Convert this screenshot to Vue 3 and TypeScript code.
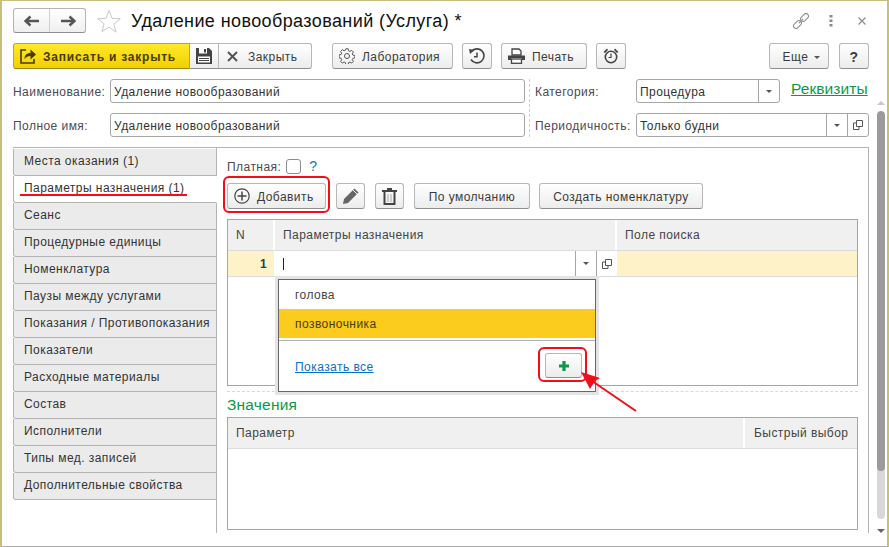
<script setup lang="ts">
const tabs: string[] = [
  'Места оказания (1)', 'Параметры назначения (1)', 'Сеанс', 'Процедурные единицы', 'Номенклатура',
  'Паузы между услугами', 'Показания / Противопоказания', 'Показатели', 'Расходные материалы',
  'Состав', 'Исполнители', 'Типы мед. записей', 'Дополнительные свойства',
]
const activeTab = 1
</script>

<template>
  <div class="window">
    <header class="head">
      <div class="nav">
        <button class="nav-btn">
          <svg width="16" height="12" viewBox="0 0 16 12"><path d="M1 6h14M6.500 1.500 1.500 6l5 4.500" fill="none" stroke="#555" stroke-width="2.400"/></svg>
        </button>
        <button class="nav-btn">
          <svg width="16" height="12" viewBox="0 0 16 12"><path d="M1 6h14M9.500 1.500 14.500 6l-5 4.500" fill="none" stroke="#555" stroke-width="2.400"/></svg>
        </button>
      </div>
      <svg class="star" width="24" height="24" viewBox="0 0 24 24"><path d="M12 1.500l3 7.800 8.300.5-6.400 5.300 2.100 8L12 18.200 5 22.600l2.100-8L.7 9.800 9 9.300z" fill="#fff" stroke="#c6c8ca"/></svg>
      <h1 class="title">Удаление новообразований (Услуга) *</h1>
      <div class="win-icons">
        <svg width="16" height="16" viewBox="0 0 16 16"><g fill="none" stroke="#8a8a8a" transform="rotate(-45 8 8)"><rect x="-1.500" y="5.500" width="9" height="5" rx="2.500"/><rect x="8.500" y="5.500" width="9" height="5" rx="2.500"/><path d="M5 8h6"/></g></svg>
        <svg class="dots" width="4" height="12" viewBox="0 0 4 12"><g fill="#8a8a8a"><rect x="0.500" y="0" width="3" height="2.500"/><rect x="0.500" y="4.500" width="3" height="2.500"/><rect x="0.500" y="9" width="3" height="2.500"/></g></svg>
        <svg class="x" width="8" height="8" viewBox="0 0 8 8"><path d="M.5.500l7 7M7.500.500l-7 7" stroke="#8a8a8a" stroke-width="1.100"/></svg>
      </div>
    </header>

    <div class="toolbar">
      <div class="group">
        <button class="btn primary">
          <svg width="16" height="16" viewBox="0 0 16 16"><path d="M6 2H1v13h13v-4" fill="none" stroke="#4a3b00" stroke-width="1.600"/><path d="M4.500 11c0-4 2.500-6 6-6V1.500L16 6.500l-5.500 5V8c-2.500 0-4.500 1-6 3z" fill="#4a3b00"/></svg>
          Записать и закрыть
        </button>
        <button class="btn joined icon-save">
          <svg width="16" height="16" viewBox="0 0 16 16"><path d="M0 0h13l3 3v13H0z" fill="#444"/><rect x="3" y="0" width="8" height="5.500" fill="#fff"/><rect x="8" y="1" width="2" height="3.500" fill="#444"/><rect x="2" y="8.500" width="12" height="6" fill="#fff"/><path d="M3 10.500h10M3 12.500h10" stroke="#444"/></svg>
        </button>
        <button class="btn joined close">
          <svg width="11" height="11" viewBox="0 0 11 11"><path d="M1 1l9 9M10 1l-9 9" stroke="#555" stroke-width="2"/></svg>
          Закрыть
        </button>
      </div>
      <button class="btn lab">
        <svg width="16" height="16" viewBox="0 0 16 16"><circle cx="8" cy="8" r="2.500" fill="none" stroke="#555"/><path d="M6.800 .8h2.400l.4 2 1.300.6 1.800-1.100 1.700 1.700-1.100 1.800.6 1.300 2 .4v2.400l-2 .4-.6 1.300 1.100 1.800-1.700 1.700-1.800-1.100-1.300.6-.4 2H6.800l-.4-2-1.300-.6-1.800 1.100-1.700-1.700 1.100-1.800-.6-1.300-2-.4V6.900l2-.4.6-1.300-1.100-1.800 1.700-1.700 1.800 1.100 1.300-.6z" fill="none" stroke="#555"/></svg>
        Лаборатория
      </button>
      <button class="btn square hist">
        <svg width="16" height="16" viewBox="0 0 16 16"><path d="M2.500 3.500A7 7 0 1 1 2 11.500" fill="none" stroke="#444" stroke-width="1.600"/><path d="M0 1l5.500 1L1 6z" fill="#444"/><path d="M8 4.500V8.700H5" fill="none" stroke="#444" stroke-width="1.500"/></svg>
      </button>
      <button class="btn print">
        <svg width="17" height="16" viewBox="0 0 17 16"><path d="M4 1h7l2 2v4H4z" fill="#fff" stroke="#444" stroke-width="1.300"/><path d="M0 7.500h17V12h-3v-2H3v2H0z" fill="#444"/><rect x="3.500" y="11" width="10" height="4.300" fill="#fff" stroke="#444" stroke-width="1.300"/></svg>
        Печать
      </button>
      <button class="btn square alarm">
        <svg width="16" height="16" viewBox="0 0 16 16"><circle cx="8" cy="9" r="5.700" fill="none" stroke="#444" stroke-width="1.600"/><path d="M8 5.500V9.500H5.500" fill="none" stroke="#444" stroke-width="1.200"/><path d="M0.500 4 4 .5 5 2 2 5zM15.500 4 12 .5 11 2l3 3z" fill="#444"/></svg>
      </button>
      <button class="btn more">Еще <i class="caret"></i></button>
      <button class="btn square help">?</button>
    </div>

    <div class="fields">
      <div class="col-left">
        <div class="row">
          <label class="lbl name-lbl">Наименование:</label>
          <div class="input wide">Удаление новообразований</div>
        </div>
        <div class="row">
          <label class="lbl name-lbl">Полное имя:</label>
          <div class="input wide">Удаление новообразований</div>
        </div>
      </div>
      <div class="col-right">
        <div class="row">
          <label class="lbl cat-lbl">Категория:</label>
          <div class="input cat">
            <span class="val">Процедура</span>
            <span class="cell"><i class="caret"></i></span>
          </div>
          <a class="requisites">Реквизиты</a>
        </div>
        <div class="row">
          <label class="lbl cat-lbl">Периодичность:</label>
          <div class="input per">
            <span class="val">Только будни</span>
            <span class="cell"><i class="caret"></i></span>
            <span class="cell open"><svg width="10" height="10" viewBox="0 0 10 10"><path d="M3.500.5h6v6h-6zM3 3H.5v6.500H6V7" fill="none" stroke="#555"/></svg></span>
          </div>
        </div>
      </div>
    </div>

    <div class="body">
      <div class="content">
        <nav class="tabs">
          <div v-for="(t, i) in tabs" :key="t" class="tab" :class="{ active: i === activeTab }">{{ t }}</div>
        </nav>
        <section class="page">
          <div class="paid">
            <span class="lbl">Платная:</span>
            <span class="check"></span>
            <span class="q">?</span>
          </div>
          <div class="actions">
            <button class="btn add">
              <svg width="16" height="16" viewBox="0 0 16 16"><circle cx="8" cy="8" r="7.200" fill="none" stroke="#444" stroke-width="1.200"/><path d="M8 3.500v9M3.500 8h9" stroke="#444" stroke-width="1.500"/></svg>
              Добавить
            </button>
            <button class="btn icon29">
              <svg width="18" height="18" viewBox="0 0 18 18"><path d="M12.500 1.500l4 4L6 16l-5 1 1-5z" fill="#666"/><path d="M11 3l4 4" stroke="#fff"/></svg>
            </button>
            <button class="btn icon29">
              <svg width="15" height="17" viewBox="0 0 15 17"><path d="M5 1h5M0 3h15" stroke="#444" stroke-width="2"/><path d="M2.500 4v12h10V4" fill="none" stroke="#444" stroke-width="2"/><path d="M6 6v8M9 6v8" stroke="#aaa"/></svg>
            </button>
            <button class="btn dflt">По умолчанию</button>
            <button class="btn create">Создать номенклатуру</button>
          </div>

          <div class="grid top">
            <div class="grid-head">
              <div class="hc n">N</div>
              <div class="hc param">Параметры назначения</div>
              <div class="hc search">Поле поиска</div>
            </div>
            <div class="grid-row">
              <div class="rc n">1</div>
              <div class="rc param">
                <span class="cursor"></span>
                <span class="cell"><i class="caret"></i></span>
                <span class="cell open"><svg width="10" height="10" viewBox="0 0 10 10"><path d="M3.500.5h6v6h-6zM3 3H.5v6.500H6V7" fill="none" stroke="#555"/></svg></span>
              </div>
              <div class="rc search"></div>
            </div>
          </div>

          <div class="dash"></div>
          <div class="values-title">Значения</div>

          <div class="grid bottom">
            <div class="grid-head">
              <div class="hc p2">Параметр</div>
              <div class="hc quick">Быстрый выбор</div>
            </div>
          </div>
        </section>
      </div>

      <aside class="scroll">
        <i class="arrow up"></i>
        <div class="track"><div class="thumb"></div></div>
        <i class="arrow down"></i>
      </aside>
    </div>

    <div class="popup">
      <div class="item">голова</div>
      <div class="item sel">позвоночника</div>
      <div class="pop-foot">
        <a class="show-all">Показать все</a>
        <button class="btn plus">
          <svg width="12" height="12" viewBox="0 0 12 12"><path d="M6 1v10M1 6h10" stroke="#0a9a46" stroke-width="3.200"/></svg>
        </button>
      </div>
    </div>

    <div class="mark mark-add"></div>
    <div class="mark mark-plus"></div>
    <div class="mark-line"></div>
    <svg class="arrow-note" width="70" height="50" viewBox="0 0 70 50">
      <path d="M56 48 12 18" stroke="#f00e1a" stroke-width="2" fill="none"/>
      <path d="M1 9 20 15 15 18 10 26z" fill="#f00e1a"/>
    </svg>
  </div>
</template>

<style>
html, body { margin: 0; background: #fff; }
</style>

<style scoped>
* { box-sizing: border-box; }
.window {
  position: relative;
  width: 889px;
  height: 547px;
  overflow: hidden;
  background: #fff;
  border: 1px solid #c9bd80;
  border-width: 1px 2px 0 2px;
  font: 12px/14px "Liberation Sans", Arial, sans-serif;
  letter-spacing: 0.45px;
  color: #3b3b3b;
}
.window::after {
  content: "";
  position: absolute;
  left: 0; right: 0; bottom: 0;
  height: 1px;
  background: #a8a8a8;
}
button { font: inherit; letter-spacing: inherit; color: inherit; margin: 0; }
.head { display: flex; align-items: center; height: 25px; margin: 7px 0 0 11px; }
.nav { display: flex; width: 73px; height: 25px; border: 1px solid #b4b4b4; border-bottom-color: #8e8e8e; border-radius: 3px; background: linear-gradient(#fff, #efefef); }
.nav-btn { flex: 1; border: 0; padding: 0; background: none; display: flex; align-items: center; justify-content: center; }
.nav-btn + .nav-btn { border-left: 1px solid #d0d0d0; }
.star { margin-left: 11px; }
.title { margin: 0 0 0 10px; padding-top: 1px; font: 400 18px/25px "Liberation Sans", Arial, sans-serif; letter-spacing: 0.4px; color: #111; }
.win-icons { margin-left: auto; display: flex; align-items: center; margin-right: 21px; }
.dots { margin-left: 20px; }
.x { margin-left: 25px; }
.toolbar { display: flex; height: 26px; margin: 10px 0 0 11px; }
.btn {
  display: inline-flex; align-items: center; justify-content: center; gap: 7px;
  height: 26px; padding: 2px 0 0; border: 1px solid #b7b7b7; border-bottom-color: #8e8e8e; border-radius: 3px;
  background: linear-gradient(#fff, #ececec); white-space: nowrap;
}
.btn svg { margin-top: -2px; }
.group { display: flex; }
.primary { width: 177px; justify-content: flex-start; padding-left: 6px; background: linear-gradient(#ffe92a, #f3d000); border-color: #c9a900 #c9a900 #9e8600; border-radius: 3px 0 0 3px; font-weight: 700; letter-spacing: 0.78px; color: #4a3b00; gap: 7px; }
.joined { border-left: 0; border-radius: 0; }
.icon-save { width: 29px; }
.close { width: 93px; justify-content: flex-start; padding-left: 8px; gap: 10px; border-radius: 0 3px 3px 0; }
.lab { width: 121px; margin-left: 20px; justify-content: flex-start; padding-left: 6px; }
.square { width: 30px; }
.icon29 { width: 29px; }
.hist { margin-left: 9px; }
.print { width: 86px; margin-left: 9px; justify-content: flex-start; padding-left: 6px; }
.alarm { margin-left: 9px; }
.more { width: 60px; margin-left: 143px; gap: 6px; padding-left: 5px; }
.help { margin-left: 10px; font-weight: 700; font-size: 14px; }
.caret { display: inline-block; width: 0; height: 0; border: 3px solid transparent; border-top: 3px solid #555; border-bottom: 0; }
.fields { display: flex; margin: 10px 0 0 11px; }
.col-left { width: 517px; border-right: 1px dashed #d0d0d0; }
.col-right { padding-left: 5px; }
.row { display: flex; align-items: center; height: 24px; }
.row + .row { margin-top: 10px; }
.lbl { color: #4a4a55; white-space: nowrap; padding-top: 1px; }
.name-lbl { width: 97px; }
.cat-lbl { width: 101px; }
.input { display: flex; align-items: center; height: 24px; border: 1px solid #a6a6a6; border-radius: 3px; padding-left: 3px; color: #333; background: #fff; white-space: nowrap; }
.wide { width: 415px; padding-top: 2px; }
.val { flex: 1; padding-top: 2px; }
.cat { width: 144px; }
.per { width: 233px; }
.cell { display: flex; align-items: center; justify-content: center; width: 21px; height: 100%; border-left: 1px solid #a6a6a6; }
.requisites { margin-left: 11px; font-size: 15.500px; letter-spacing: 0.08px; color: #0a9a46; text-decoration: underline; line-height: 20px; position: relative; top: -2px; }
.body { display: flex; margin-top: 10px; }
.content { display: flex; margin-left: 11px; width: 856px; height: 386px; border-top: 1px solid #b4b4b4; }
.tabs { width: 204px; flex: none; padding-top: 1px; border-right: 1px solid #b4b4b4; }
.tab {
  width: 204px; height: 27px; padding: 5px 0 0 10px; background: #ebebeb; border: 1px solid #b4b4b4; border-top: 0;
  border-radius: 0 0 0 3px; white-space: nowrap; color: #333;
}
.tab.active { background: #fff; border-right-color: #fff; }
.page { flex: 1; border-right: 1px solid #b4b4b4; padding: 0 10px; position: relative; }
.paid { display: flex; align-items: center; height: 14px; margin-top: 11px; }
.check { width: 15px; height: 15px; border: 1px solid #8e8e8e; border-radius: 3px; margin-left: 5px; }
.q { margin-left: 8px; color: #0a78c8; font-size: 14px; font-weight: 400; }
.actions { display: flex; gap: 10px; margin-top: 10px; }
.add { width: 99px; justify-content: flex-start; padding-left: 6px; }
.dflt { width: 116px; }
.create { width: 164px; margin-left: -1px; }
.grid { border: 1px solid #a6a6a6; width: 631px; }
.top { height: 167px; margin-top: 10px; }
.bottom { height: 113px; margin-top: 1px; }
.grid-head { display: flex; height: 31px; background: #f0f0f0; border-bottom: 1px solid #dcdcdc; }
.hc { display: flex; align-items: center; padding: 0 8px; border-right: 2px solid #fff; color: #444; white-space: nowrap; }
.hc:last-child { border-right: 0; flex: 1; }
.hc.n { width: 47px; }
.hc.param { width: 342px; }
.hc.p2 { width: 517px; }
.hc.quick { padding-left: 9px; }
.grid-row { display: flex; height: 26px; border-bottom: 1px solid #dcdcdc; }
.rc { height: 25px; }
.rc.n { width: 47px; background: #fdf2c8; font-weight: 700; text-align: right; padding: 6px 7px 0 0; border-right: 1px solid #fff; }
.rc.param { width: 342px; display: flex; align-items: center; padding-left: 8px; }
.cursor { width: 1px; height: 12px; background: #222; margin-right: auto; }
.rc.search { flex: 1; background: #fdf2c8; }
.dash { border-top: 1px dashed #d8d8d8; margin-top: 5px; }
.values-title { font-size: 15.500px; line-height: 20px; letter-spacing: 0.2px; color: #0a9a46; margin-top: 3px; height: 21px; }
.scroll { flex: none; width: 8px; margin-left: 8px; height: 432px; position: relative; top: -46px; display: flex; flex-direction: column; align-items: center; }
.arrow { position: absolute; width: 0; height: 0; border: 4px solid transparent; }
.arrow.up { top: 0; border-top: 0; border-bottom: 4px solid #c8c8c8; }
.arrow.down { bottom: 0; border-bottom: 0; border-top: 4px solid #666; }
.track { width: 8px; height: 408px; margin-top: 10px; border-radius: 4px; background: #d8d8d8; overflow: hidden; }
.thumb { height: 360px; background: #9b9b9b; border-radius: 4px; }
.popup {
  position: absolute; left: 276px; top: 278px; width: 318px; height: 113px;
  background: #fff; border: 1px solid #666; box-shadow: 0 0 0 3px #e4e4e4;
}
.item { height: 29px; padding: 8px 0 0 16px; color: #444; }
.item.sel { background: #fbcc1e; color: #4a3b10; }
.pop-foot { margin-top: 2px; border-top: 1px solid #b4b4b4; height: 51px; display: flex; align-items: flex-start; justify-content: space-between; padding: 12px 13px 0 16px; }
.show-all { color: #0a6fc8; text-decoration: underline; margin-top: 7px; }
.plus { width: 37px; height: 25px; padding: 0; }
.plus svg { margin: 0; }
.mark { position: absolute; border: 2px solid #f00e1a; border-radius: 6px; pointer-events: none; }
.mark-add { left: 221px; top: 175px; width: 107px; height: 37px; }
.mark-plus { left: 536px; top: 346px; width: 49px; height: 35px; }
.mark-line { position: absolute; left: 18px; top: 193px; width: 167px; height: 2px; background: #f00e1a; }
.arrow-note { position: absolute; left: 578px; top: 362px; }
</style>
